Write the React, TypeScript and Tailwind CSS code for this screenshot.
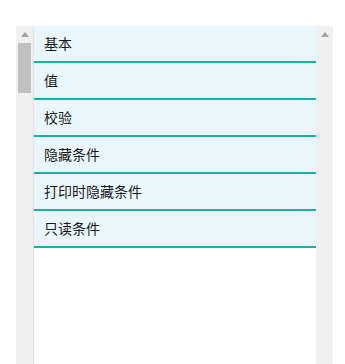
const items = ["基本", "值", "校验", "隐藏条件", "打印时隐藏条件", "只读条件"];

function ScrollTrack({ withThumb }: { withThumb?: boolean }) {
  return (
    <div className="flex w-[17px] shrink-0 flex-col items-center bg-[#f0f0f0]">
      <div className="flex h-[17px] w-full items-center justify-center">
        <svg width="8" height="5" viewBox="0 0 8 5">
          <path d="M4 0 L8 5 L0 5 Z" fill="#a3a3a3" />
        </svg>
      </div>
      {withThumb && <div className="h-[50px] w-[13px] bg-[#c1c1c1]" />}
    </div>
  );
}

export default function App() {
  return (
    <div
      className="flex h-[364px] w-[345px] overflow-hidden bg-white pl-[16px] pt-[26px]"
      style={{ fontFamily: '"Microsoft YaHei", "Noto Sans CJK SC", sans-serif' }}
    >
      <ScrollTrack withThumb />
      <div className="w-px shrink-0 bg-[#e3e3e3]" />
      <div className="flex w-[282px] flex-col bg-white">
        {items.map((label) => (
          <div
            key={label}
            className="flex h-[37px] items-center border-b-2 border-[#18b2a2] bg-[#e9f6fb] pl-[10px] text-[14px] text-[#1a1a1a]"
          >
            {label}
          </div>
        ))}
      </div>
      <ScrollTrack />
    </div>
  );
}
